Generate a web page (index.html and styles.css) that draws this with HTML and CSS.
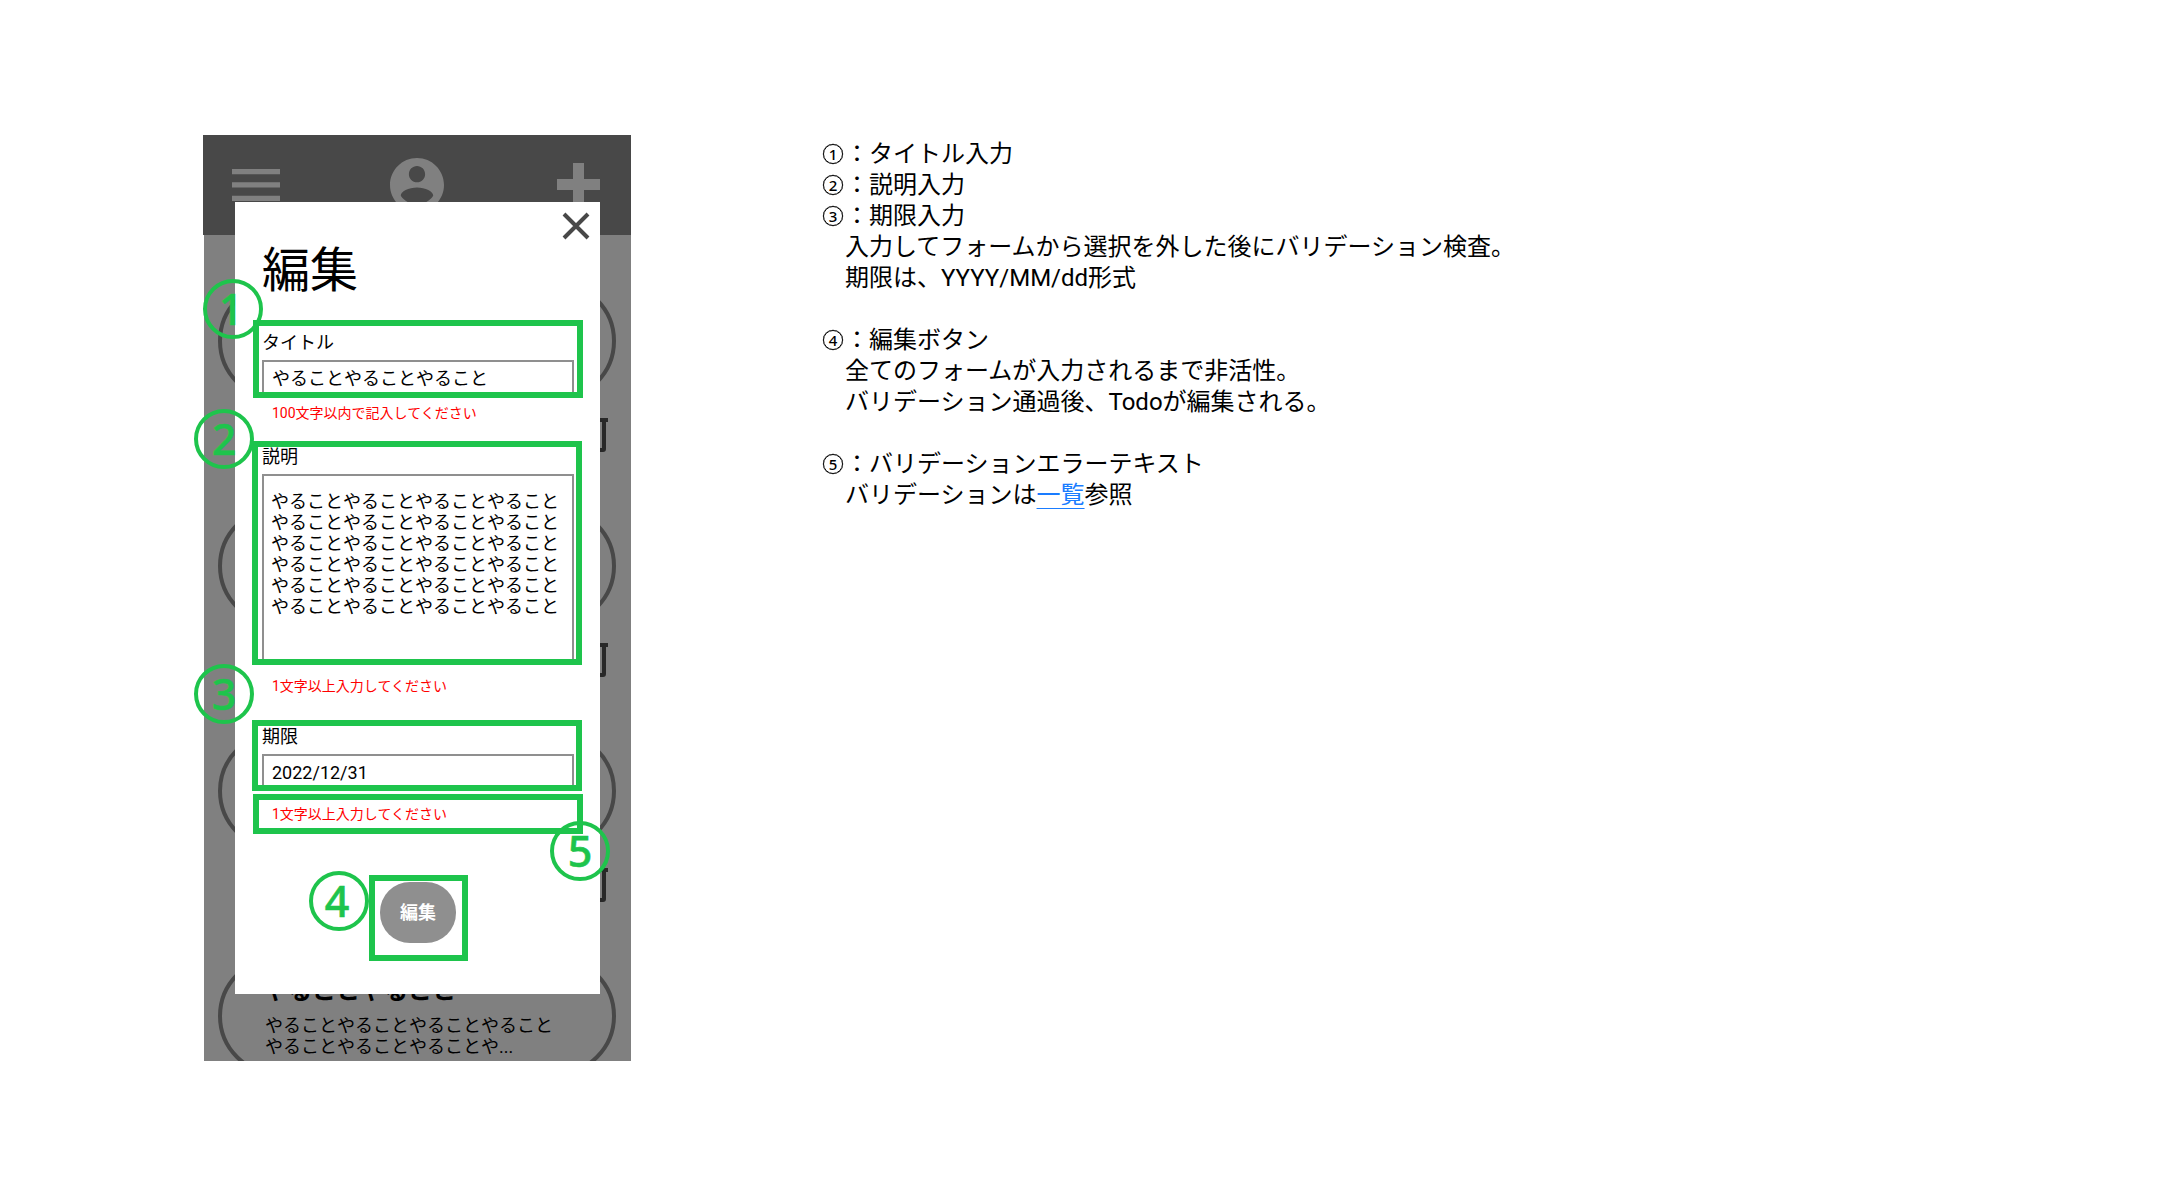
FILE: index.html
```html
<!DOCTYPE html>
<html lang="ja">
<head>
<meta charset="utf-8">
<title>編集</title>
<link rel="stylesheet" href="styles.css">
</head>
<body>
<main class="sheet">
  <section class="phone">
    <div class="screen">
      <header class="bar">
        <svg class="icon-menu" viewBox="0 0 48 32"><path d="M0 0h48v5.300H0zM0 13.300h48v5.300H0zM0 26.700h48V32H0z"/></svg>
        <svg class="icon-user" viewBox="2 2 20 20"><path fill-rule="evenodd" d="M12 2C6.480 2 2 6.480 2 12s4.480 10 10 10 10-4.480 10-10S17.520 2 12 2zm0 3c1.660 0 3 1.340 3 3s-1.340 3-3 3-3-1.340-3-3 1.340-3 3-3zm0 14.200c-2.500 0-4.710-1.280-6-3.220-.2-1.600 3-3.080 6-3.080s6.200 1.480 6 3.080c-1.290 1.940-3.500 3.220-6 3.220z"/></svg>
        <svg class="icon-plus" viewBox="0 0 43 43"><path d="M16 0h11v16h16v11H27v16H16V27H0V16h16z"/></svg>
      </header>
      <div class="cards">
        <article class="item"><div class="card"></div><svg class="trash" viewBox="0 0 30 40"><path d="M9 0h12v4h9v4H0V4h9zM2 8h4v26h18V8h4v27a3 3 0 0 1-3 3H5a3 3 0 0 1-3-3z"/></svg></article>
        <article class="item"><div class="card"></div><svg class="trash" viewBox="0 0 30 40"><path d="M9 0h12v4h9v4H0V4h9zM2 8h4v26h18V8h4v27a3 3 0 0 1-3 3H5a3 3 0 0 1-3-3z"/></svg></article>
        <article class="item"><div class="card"></div><svg class="trash" viewBox="0 0 30 40"><path d="M9 0h12v4h9v4H0V4h9zM2 8h4v26h18V8h4v27a3 3 0 0 1-3 3H5a3 3 0 0 1-3-3z"/></svg></article>
        <article class="item">
          <div class="card">
            <h2 class="card-title">やることやること</h2>
            <p class="card-text">やることやることやることやること<br>やることやることやることや...</p>
          </div>
        </article>
      </div>
    </div>
    <div class="modal">
      <svg class="close" viewBox="0 0 28 28"><path d="M2 2l24 24M26 2L2 26"/></svg>
      <h1 class="modal-title">編集</h1>
      <div class="field">
        <span class="label">タイトル</span>
        <div class="input">やることやることやること</div>
        <p class="error">100文字以内で記入してください</p>
      </div>
      <div class="field field-desc">
        <span class="label">説明</span>
        <div class="input area">やることやることやることやること<br>やることやることやることやること<br>やることやることやることやること<br>やることやることやることやること<br>やることやることやることやること<br>やることやることやることやること</div>
        <p class="error">1文字以上入力してください</p>
      </div>
      <div class="field field-date">
        <span class="label">期限</span>
        <div class="input">2022/12/31</div>
        <p class="error">1文字以上入力してください</p>
      </div>
      <div class="submit">編集</div>
    </div>
    <div class="frame frame-1"></div>
    <div class="frame frame-2"></div>
    <div class="frame frame-3"></div>
    <div class="frame frame-4"></div>
    <div class="frame frame-5"></div>
    <span class="mark mark-1">1</span>
    <span class="mark mark-2">2</span>
    <span class="mark mark-3">3</span>
    <span class="mark mark-4">4</span>
    <span class="mark mark-5">5</span>
  </section>
  <section class="notes">
    <p><span class="num">1</span>：タイトル入力</p>
    <p><span class="num">2</span>：説明入力</p>
    <p><span class="num">3</span>：期限入力</p>
    <p class="sub">入力してフォームから選択を外した後にバリデーション検査。</p>
    <p class="sub">期限は、YYYY/MM/dd形式</p>
    <p class="gap"><span class="num">4</span>：編集ボタン</p>
    <p class="sub">全てのフォームが入力されるまで非活性。</p>
    <p class="sub">バリデーション通過後、Todoが編集される。</p>
    <p class="gap"><span class="num">5</span>：バリデーションエラーテキスト</p>
    <p class="sub">バリデーションは<a class="link">一覧</a>参照</p>
  </section>
</main>
</body>
</html>
```
FILE: styles.css
```css
* { box-sizing: border-box; margin: 0; padding: 0; }
body {
  background: #fff;
  color: #000;
  font-family: Roboto, "Noto Sans CJK JP", sans-serif;
  font-size: 18px;
  line-height: 21px;
}
.sheet {
  display: flex;
  gap: 190px;
  width: 2170px;
  height: 1195px;
  padding: 135px 0 0 204px;
  overflow: hidden;
}

/* phone screen behind the dialog */
.phone { position: relative; width: 427px; height: 926px; flex: none; }
.screen { height: 100%; background: #808080; }
.bar {
  display: flex;
  justify-content: space-between;
  height: 100px;
  margin-left: -1px;
  padding: 0 31px 0 29px;
  background: #484848;
}
.bar svg { fill: #808080; flex: none; }
.icon-menu { width: 48px; height: 32px; margin-top: 34px; }
.icon-user { width: 54px; height: 54px; margin: 23px 4px 0 0; }
.icon-plus { width: 43px; height: 43px; margin-top: 28px; }
.cards { height: 826px; padding: 46px 15px 0 14px; overflow: hidden; }
.item { height: 225px; }
.card {
  height: 120px;
  padding: 17px 0 0 42px;
  border: 4px solid #484848;
  border-radius: 60px;
  white-space: nowrap;
}
.trash { display: block; width: 30px; height: 40px; margin: 13px 0 0 360px; fill: #282828; }
.card-title { font-size: 24px; line-height: 28px; }
.card-text { margin-top: 10px; padding-left: 1px; }

/* edit dialog */
.modal {
  position: absolute;
  left: 31px;
  top: 67px;
  width: 365px;
  height: 792px;
  padding: 10px 26px 0 27px;
  background: #fff;
}
.close {
  display: block;
  width: 28px;
  height: 28px;
  margin-left: auto;
  margin-right: -16px;
  stroke: #484848;
  stroke-width: 4;
}
.modal-title { margin-top: 3px; font-size: 48px; font-weight: 400; line-height: 56px; }
.label { display: block; }
.field { margin-top: 33px; }
.field-desc { margin-top: 25px; }
.field-date { margin-top: 32px; }
.input {
  width: 312px;
  height: 36px;
  margin-top: 7px;
  padding: 6px 8px;
  border: 2px solid #8f8f8f;
  white-space: nowrap;
}
.area { height: 188px; padding: 15px 7px; }
.error { margin: 9px 0 0 10px; color: #f00; font-size: 14px; line-height: 16px; }
.field-desc .error, .field-date .error { margin-top: 16px; }
.submit {
  width: 76px;
  height: 61px;
  margin: 60px 0 0 118px;
  border-radius: 30px;
  background: #8f8f8f;
  color: #fff;
  font-weight: 700;
  line-height: 61px;
  text-align: center;
}

/* annotations over the screen */
.frame { position: absolute; border: 6px solid #1ec44c; }
.frame-1 { left: 49px; top: 185px; width: 330px; height: 78px; }
.frame-2 { left: 48px; top: 306px; width: 330px; height: 224px; }
.frame-3 { left: 48px; top: 585px; width: 330px; height: 71px; }
.frame-4 { left: 165px; top: 740px; width: 99px; height: 86px; }
.frame-5 { left: 49px; top: 659px; width: 330px; height: 40px; }
.mark {
  position: absolute;
  width: 60px;
  height: 60px;
  border: 4px solid #1ec44c;
  border-radius: 50%;
  color: #1ec44c;
  font: 500 43px/51px "Noto Sans", sans-serif;
  -webkit-text-stroke: 0.6px #1ec44c;
  text-align: center;
}
.mark-1 { left: -1px; top: 144px; padding-right: 4px; }
.mark-2 { left: -10px; top: 274px; }
.mark-3 { left: -10px; top: 529px; }
.mark-4 { left: 105px; top: 736px; padding-right: 4px; }
.mark-5 { left: 346px; top: 686px; }

/* notes */
.notes { font-size: 24px; line-height: 31px; white-space: nowrap; padding-top: 4px; }
.notes p { height: 31px; }
.num {
  display: inline-block;
  width: 20px;
  height: 20px;
  margin: 0 2px;
  border: 1px solid #000;
  border-radius: 50%;
  box-shadow: 0 0 0 0.2px #000;
  font: 500 15px/18px "Noto Sans", sans-serif;
  text-align: center;
  vertical-align: 2px;
}
.sub { padding-left: 24px; }
.gap { margin-top: 31px; }
.link {
  color: #1a7cff;
  text-decoration: underline;
  text-decoration-thickness: 1px;
  text-underline-offset: 5px;
}
```
